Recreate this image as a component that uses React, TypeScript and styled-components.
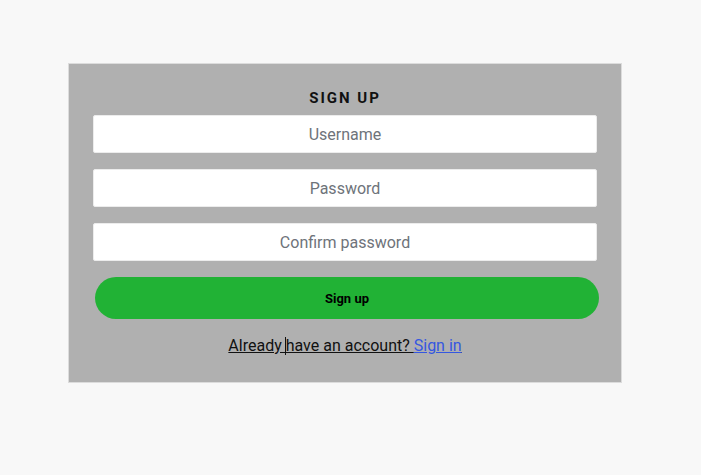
import React from "react";
import styled, { createGlobalStyle } from "styled-components";

const Global = createGlobalStyle`
  html, body { margin: 0; padding: 0; background: #f8f8f8; }
  body { font-family: Roboto, "Liberation Sans", sans-serif; }
  * { box-sizing: border-box; }
`;

const Page = styled.div`
  padding: 63px 0 0 68px;
`;

const Card = styled.form`
  width: 554px;
  height: 320px;
  background: #b0b0b0;
  border: 1px solid #dcdcdc;
  padding: 25px 24px 0 24px;
  display: flex;
  flex-direction: column;
  align-items: stretch;
`;

const Title = styled.h2`
  margin: 0 0 8px 0;
  font-size: 15px;
  line-height: 18px;
  font-weight: 700;
  letter-spacing: 2px;
  text-align: center;
  color: #111;
`;

const Fields = styled.div`
  display: flex;
  flex-direction: column;
  gap: 16px;
`;

const Input = styled.input`
  height: 38px;
  width: 504px;
  border: 1px solid #ececec;
  border-radius: 2px;
  background: #fff;
  font-family: Roboto, "Liberation Sans", sans-serif;
  font-size: 16px;
  text-align: center;
  color: #333;
  outline: none;
  &::placeholder { color: #6e737a; }
`;

const Button = styled.button`
  margin: 16px 0 0 2px;
  width: 504px;
  height: 42px;
  border: none;
  border-radius: 21px;
  background: #21b235;
  color: #000;
  font-family: Roboto, "Liberation Sans", sans-serif;
  font-size: 13px;
  font-weight: 700;
`;

const Footer = styled.p`
  margin: 17px 0 0 0;
  text-align: center;
  font-size: 16px;
  line-height: 19px;
  color: #111;
  text-decoration: underline;
`;

const Caret = styled.span`
  position: relative;
  display: inline-block;
  width: 0;
  &::after {
    content: "";
    position: absolute;
    left: -1px;
    top: -14px;
    width: 1px;
    height: 18px;
    background: #111;
  }
`;

const Link = styled.a`
  color: #3557e0;
  text-decoration: underline;
`;

export default function App() {
  return (
    <>
      <Global />
      <Page>
        <Card onSubmit={(e) => e.preventDefault()}>
          <Title>SIGN UP</Title>
          <Fields>
            <Input placeholder="Username" />
            <Input placeholder="Password" type="password" />
            <Input placeholder="Confirm password" type="password" />
          </Fields>
          <Button type="submit">Sign up</Button>
          <Footer>
            Already <Caret />have an account? <Link href="#">Sign in</Link>
          </Footer>
        </Card>
      </Page>
    </>
  );
}
